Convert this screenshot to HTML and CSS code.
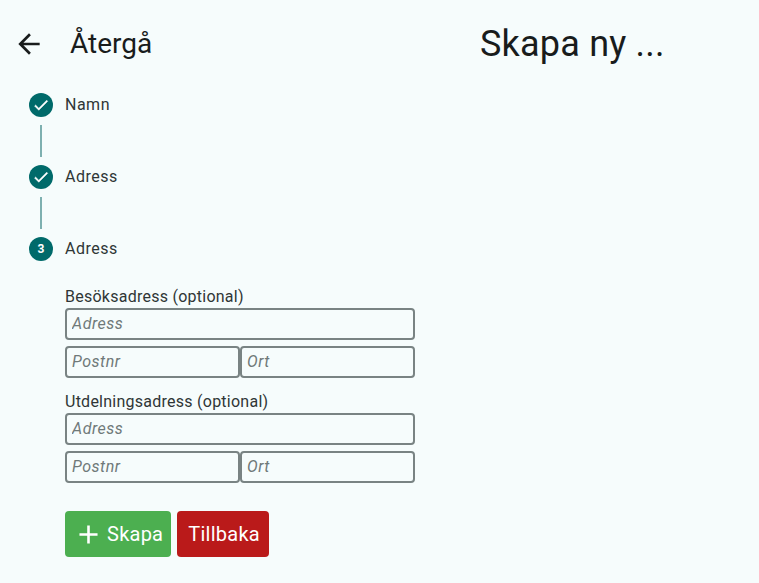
FILE: index.html
```html
<!DOCTYPE html>
<html>
<head>
  <meta charset="utf-8">
  <title>Skapa ny</title>
  <link rel="stylesheet" href="styles.css">
</head>
<body>
  <header class="topbar">
    <div class="back">
      <svg class="back-icon" viewBox="0 0 24 24"><path d="M20 11H7.83l5.59-5.59L12 4l-8 8 8 8 1.41-1.41L7.83 13H20v-2z"/></svg>
      <span class="back-text">Återgå</span>
    </div>
    <h1 class="title">Skapa ny ...</h1>
  </header>

  <div class="stepper">
    <div class="step">
      <span class="dot"><svg class="check" width="18" height="18" viewBox="0 0 24 24"><path d="M9 16.17 4.83 12l-1.42 1.41L9 19 21 7l-1.41-1.41z"/></svg></span>
      <span class="step-label">Namn</span>
    </div>
    <div class="connector"></div>
    <div class="step">
      <span class="dot"><svg class="check" width="18" height="18" viewBox="0 0 24 24"><path d="M9 16.17 4.83 12l-1.42 1.41L9 19 21 7l-1.41-1.41z"/></svg></span>
      <span class="step-label">Adress</span>
    </div>
    <div class="connector"></div>
    <div class="step">
      <span class="dot dot-num">3</span>
      <span class="step-label">Adress</span>
    </div>

    <form class="step-body">
      <div class="group">
        <label class="group-label">Besöksadress (optional)</label>
        <input class="field" type="text" placeholder="Adress">
        <div class="row">
          <input class="field" type="text" placeholder="Postnr">
          <input class="field" type="text" placeholder="Ort">
        </div>
      </div>
      <div class="group">
        <label class="group-label">Utdelningsadress (optional)</label>
        <input class="field" type="text" placeholder="Adress">
        <div class="row">
          <input class="field" type="text" placeholder="Postnr">
          <input class="field" type="text" placeholder="Ort">
        </div>
      </div>
      <div class="actions">
        <button type="button" class="btn btn-green">
          <svg viewBox="0 0 24 24"><path d="M19 13h-6v6h-2v-6H5v-2h6V5h2v6h6v2z"/></svg>
          Skapa
        </button>
        <button type="button" class="btn btn-red">Tillbaka</button>
      </div>
    </form>
  </div>
</body>
</html>
```

FILE: styles.css
```css
html, body {
  height: 100%;
}

body {
  margin: 0;
  background-color: #f6fcfc;
  color: #191c1c;
  font-family: Roboto, "Liberation Sans", sans-serif;
  overflow: hidden;
}

.topbar {
  display: flex;
  align-items: center;
  height: 88px;
  padding-left: 13px;
}

.back {
  display: flex;
  align-items: center;
  width: 467px;
}

.back-icon {
  width: 32px;
  height: 32px;
  fill: #191c1c;
}

.back-text {
  margin-left: 25px;
  font-size: 28px;
  line-height: 36px;
}

.title {
  margin: 0;
  font-size: 36px;
  font-weight: 400;
  line-height: 44px;
  letter-spacing: 0.2px;
}

.stepper {
  padding: 5px 0 0 29px;
}

.step {
  display: flex;
  align-items: center;
  height: 24px;
}

.dot {
  display: flex;
  align-items: center;
  justify-content: center;
  width: 24px;
  height: 24px;
  border-radius: 50%;
  background-color: #006a6a;
  color: #fff;
  fill: #fff;
}

.check path {
  stroke: #fff;
  stroke-width: 0.6;
}

.dot-num {
  font-size: 12px;
  font-weight: 700;
}

.step-label {
  margin-left: 12px;
  margin-top: -1px;
  font-size: 16px;
  letter-spacing: 0.5px;
  color: #2f3636;
}

.connector {
  width: 2px;
  height: 32px;
  margin: 8px 0 8px 11px;
  background-color: #7eb0b0;
}

.step-body {
  width: 350px;
  margin: 25px 0 0 36px;
}

.group {
  margin-bottom: 13px;
}

.group-label {
  display: block;
  margin-bottom: 0;
  font-size: 16px;
  line-height: 22px;
  letter-spacing: 0.25px;
  color: #2f3636;
}

.field {
  display: block;
  box-sizing: border-box;
  width: 100%;
  height: 32px;
  padding: 0 5px 2px;
  background: transparent;
  border: 2px solid #798383;
  border-radius: 4px;
  font-family: inherit;
  font-size: 16px;
  font-style: italic;
  letter-spacing: 0.5px;
  outline: none;
}

.field::placeholder {
  color: #6f7979;
  opacity: 1;
}

.row {
  display: flex;
  margin-top: 6px;
}

.row .field {
  flex: 1 1 0;
  min-width: 0;
}

.actions {
  display: flex;
  gap: 6px;
  padding-top: 15px;
}

.btn {
  display: flex;
  align-items: center;
  height: 46px;
  border: none;
  border-radius: 4px;
  color: #fff;
  font-family: inherit;
  font-size: 20px;
  letter-spacing: 0.25px;
}

.btn svg {
  fill: #fff;
  width: 31px;
  height: 31px;
  margin-right: 3px;
}

.btn-green {
  padding: 0 8px;
  background-color: #4caf50;
}

.btn-red {
  padding: 0 9px 0 11px;
  background-color: #ba1a1a;
}
```
